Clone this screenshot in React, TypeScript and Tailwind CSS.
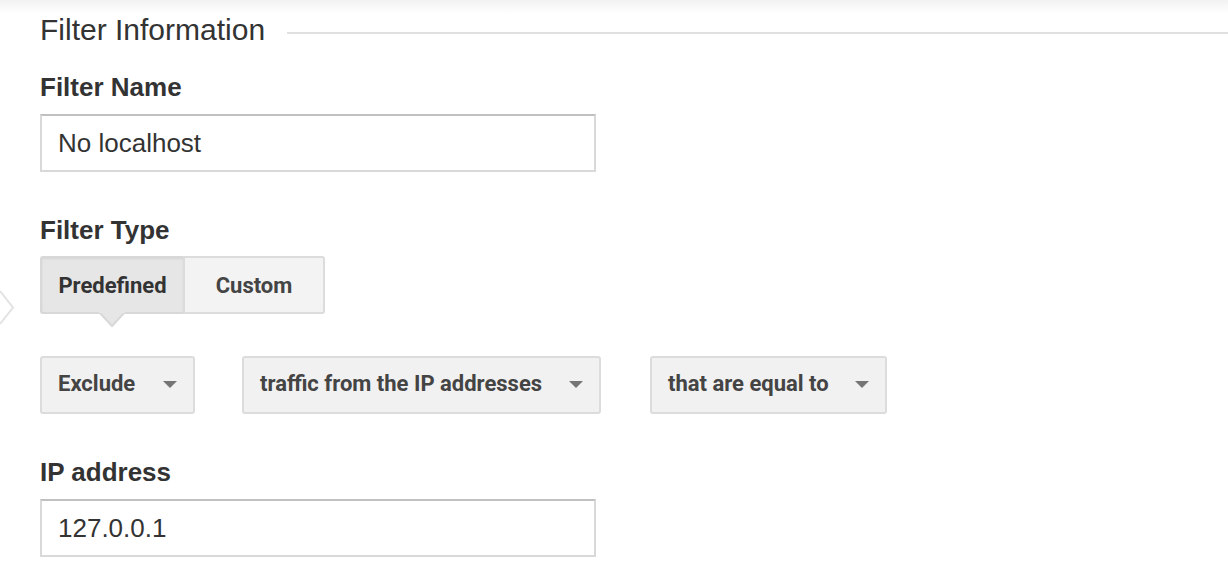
import React from "react";

const Caret = () => (
  <svg width="14" height="8" viewBox="0 0 14 8" className="mt-[2px] shrink-0">
    <path d="M0 0 L14 0 L7 7 Z" fill="#757575" />
  </svg>
);

const Select = ({ label, width }: { label: string; width: string }) => (
  <div
    className={`flex h-[57px] items-center justify-between rounded-[3px] border-2 border-[#dcdcdc] bg-[#f1f1f1] pb-[3px] pl-[16px] pr-[16px] ${width}`}
  >
    <span className="font-['Roboto',sans-serif] text-[22px] font-bold text-[#444]">{label}</span>
    <Caret />
  </div>
);

export default function App() {
  return (
    <div className="relative h-[582px] w-[1228px] overflow-hidden bg-white font-['Liberation_Sans',Arial,sans-serif] text-[#333]">
      <div className="absolute left-0 right-0 top-0 h-[14px] bg-gradient-to-b from-[#f2f2f2] to-white" />
      <div className="absolute left-0 top-[290px]">
        <svg width="16" height="36" viewBox="0 0 16 36">
          <path d="M0 1 L13 17.5 L0 34" fill="white" stroke="#e2e2e2" strokeWidth="2" />
        </svg>
      </div>
      <div className="relative flex flex-col pl-[40px]">
        <div className="flex h-[60px] items-center">
          <h2 className="text-[30px] font-normal leading-none">Filter Information</h2>
          <div className="ml-[22px] mt-[6px] h-[2px] flex-1 bg-[#e0e0e0]" />
        </div>
        <div className="mt-[12px] text-[26px] font-bold leading-[30px]">Filter Name</div>
        <div className="mt-[12px] flex h-[58px] w-[556px] items-center border-2 border-[#d9d9d9] border-t-[#c0c0c0] bg-white pl-[16px] text-[26px]">
          No localhost
        </div>
        <div className="mt-[43px] text-[26px] font-bold leading-[30px]">Filter Type</div>
        <div className="relative mt-[11px] flex h-[58px] w-[285px]">
          <div className="flex h-full w-[143px] items-center justify-center rounded-l-[3px] border-2 border-r-0 border-[#d8d8d8] bg-[#e6e6e6] shadow-[inset_0_1px_2px_rgba(0,0,0,0.08)]">
            <span className="font-['Roboto',sans-serif] text-[22px] font-bold text-[#333]">Predefined</span>
          </div>
          <div className="flex h-full flex-1 items-center justify-center rounded-r-[3px] border-2 border-[#dcdcdc] bg-[#f3f3f3]">
            <span className="font-['Roboto',sans-serif] text-[22px] font-bold text-[#444]">Custom</span>
          </div>
          <div className="absolute left-[59px] top-[56px]">
            <svg width="26" height="16" viewBox="0 0 26 16">
              <path d="M0 0 L13 14 L26 0" fill="#e6e6e6" stroke="#d8d8d8" strokeWidth="2" />
              <rect x="0" y="0" width="26" height="1" fill="#e6e6e6" />
            </svg>
          </div>
        </div>
        <div className="mt-[42px] flex items-center">
          <Select label="Exclude" width="w-[155px] h-[58px]" />
          <div className="w-[47px]" />
          <Select label="traffic from the IP addresses" width="w-[359px] h-[58px]" />
          <div className="w-[49px]" />
          <Select label="that are equal to" width="w-[237px] h-[58px]" />
        </div>
        <div className="mt-[43px] text-[26px] font-bold leading-[30px]">IP address</div>
        <div className="mt-[12px] flex h-[58px] w-[556px] items-center border-2 border-[#d9d9d9] border-t-[#c0c0c0] bg-white pl-[16px] text-[26px]">
          127.0.0.1
        </div>
      </div>
    </div>
  );
}
